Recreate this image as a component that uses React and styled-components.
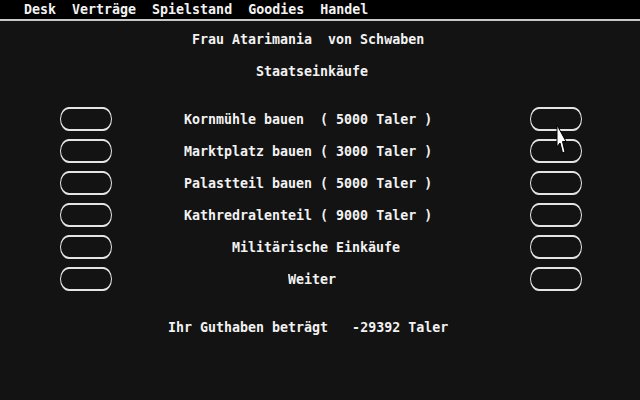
import React from 'react'
import styled, { createGlobalStyle } from 'styled-components';

const GlobalStyle = createGlobalStyle`
  html, body {
    margin: 0;
    padding: 0;
    background: #131313;
  }
`;

const Screen = styled.div`
  position: relative;
  width: 640px;
  height: 400px;
  overflow: hidden;
  background: #131313;
  color: #f2f2f2;
  font-family: "DejaVu Sans Mono", "Liberation Mono", monospace;
  font-weight: bold;
  font-size: 13.3px;
  line-height: 16px;
`;

const MenuBar = styled.div`
  height: 19px;
  background: #000;
  border-bottom: 2px solid #c8c8c8;
  display: flex;
  align-items: center;
  padding-left: 24px;
  gap: 16px;
`;

const MenuItem = styled.span`
  display: inline-block;
  transform: scaleY(1.12);
`;

const Main = styled.div`
  padding-top: 11px;
  display: flex;
  flex-direction: column;
`;

const Line = styled.div`
  height: 16px;
  padding-left: ${p => p.$col * 8}px;
  margin-top: ${p => p.$gap || 0}px;
  white-space: pre;
  & > span {
    display: inline-block;
    transform: scaleY(1.12);
  }
`;

const Options = styled.div`
  margin-top: 24px;
  display: flex;
  flex-direction: column;
`;

const Row = styled.div`
  height: 32px;
  display: flex;
  align-items: center;
  padding-left: 60px;
  padding-right: 58px;
`;

/* button outline: doubled scanlines on top/bottom, thin sides */
const Oval = styled.div`
  width: 52px;
  height: 24px;
  box-sizing: border-box;
  border-style: solid;
  border-color: #e4e4e4;
  border-width: 2px 1px;
  border-radius: 9px / 12px;
  margin-top: -3px;
  flex-shrink: 0;
`;

const Label = styled.div`
  flex: 1;
  padding-left: ${p => p.$col * 8 - 112}px;
  white-space: pre;
  & > span {
    display: inline-block;
    transform: scaleY(1.12);
  }
`;

const Pointer = styled.svg`
  position: absolute;
  left: 556px;
  top: 124px;
`;

const options = [
  { text: 'Kornmühle bauen  ( 5000 Taler )', col: 23 },
  { text: 'Marktplatz bauen ( 3000 Taler )', col: 23 },
  { text: 'Palastteil bauen ( 5000 Taler )', col: 23 },
  { text: 'Kathredralenteil ( 9000 Taler )', col: 23 },
  { text: 'Militärische Einkäufe', col: 29 },
  { text: 'Weiter', col: 36 },
];

export default function App() {
  return (
    <>
      <GlobalStyle />
      <Screen>
        <MenuBar>
          <MenuItem>Desk</MenuItem>
          <MenuItem>Verträge</MenuItem>
          <MenuItem>Spielstand</MenuItem>
          <MenuItem>Goodies</MenuItem>
          <MenuItem>Handel</MenuItem>
        </MenuBar>
        <Main>
          <Line $col={24}><span>Frau Atarimania  von Schwaben</span></Line>
          <Line $col={32} $gap={16}><span>Staatseinkäufe</span></Line>
          <Options>
            {options.map(o => (
              <Row key={o.text}>
                <Oval />
                <Label $col={o.col}><span>{o.text}</span></Label>
                <Oval />
              </Row>
            ))}
          </Options>
          <Line $col={21} $gap={24}><span>Ihr Guthaben beträgt   -29392 Taler</span></Line>
        </Main>
        {/* mouse arrow, pixels doubled vertically */}
        <Pointer width="12" height="32" viewBox="0 0 12 32">
          <path d="M1 1 L1 23 L4 19 L6.5 29 L9 28 L6.5 17.5 L10 17.5 Z" fill="#fff" stroke="#000" strokeWidth="1" />
        </Pointer>
      </Screen>
    </>
  )
}
